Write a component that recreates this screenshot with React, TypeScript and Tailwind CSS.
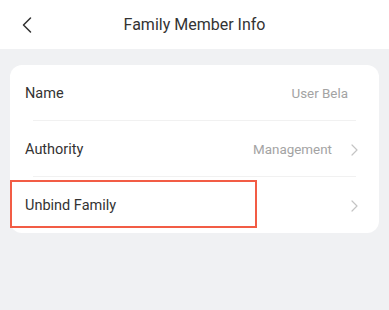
import { ChevronLeft } from 'lucide-react';

type RowProps = {
    label: string;
    value?: string;
    arrow?: boolean;
    divider?: boolean;
};

function Arrow() {
    return (
        <svg width="7" height="12" viewBox="0 0 7 12" className="ml-[19px]" fill="none">
            <path d="M1 1l5 5-5 5" stroke="#c4c4c4" strokeWidth="1.2" strokeLinecap="round" strokeLinejoin="round" />
        </svg>
    );
}

function Row({ label, value, arrow, divider }: RowProps) {
    return (
        <div className={`relative flex h-[56px] items-center pt-[2px] pl-[15px] ${arrow ? 'pr-[21px]' : 'pr-[31px]'}`}>
            <span className="flex-1 text-[14.5px] text-[#333]">{label}</span>
            {value && <span className="text-[13.4px] text-[#a3a3a3]">{value}</span>}
            {arrow && <Arrow />}
            {divider && <div className="absolute bottom-0 left-[23px] right-[23px] h-px bg-[#f1f1f1]" />}
        </div>
    );
}

export default function App() {
    return (
        <div className="flex h-[310px] w-[389px] flex-col bg-[#f0f1f3]" style={{ fontFamily: 'Roboto, sans-serif' }}>
            {/* Header */}
            <div className="relative flex h-[49px] items-center justify-center bg-white">
                <ChevronLeft className="absolute left-[13px] top-[11px] h-[28px] w-[28px] text-[#333]" strokeWidth={1.3} />
                <span className="text-[16px] text-[#333]">Family Member Info</span>
            </div>

            {/* Card */}
            <div className="relative mx-[10px] mt-[16px] rounded-[12px] bg-white">
                <Row label="Name" value="User Bela" divider />
                <Row label="Authority" value="Management" arrow divider />
                <Row label="Unbind Family" arrow />
                {/* annotation box */}
                <div className="absolute left-0 top-[115px] h-[48px] w-[247px] border-2 border-[#f25c45]" />
            </div>
        </div>
    );
}
